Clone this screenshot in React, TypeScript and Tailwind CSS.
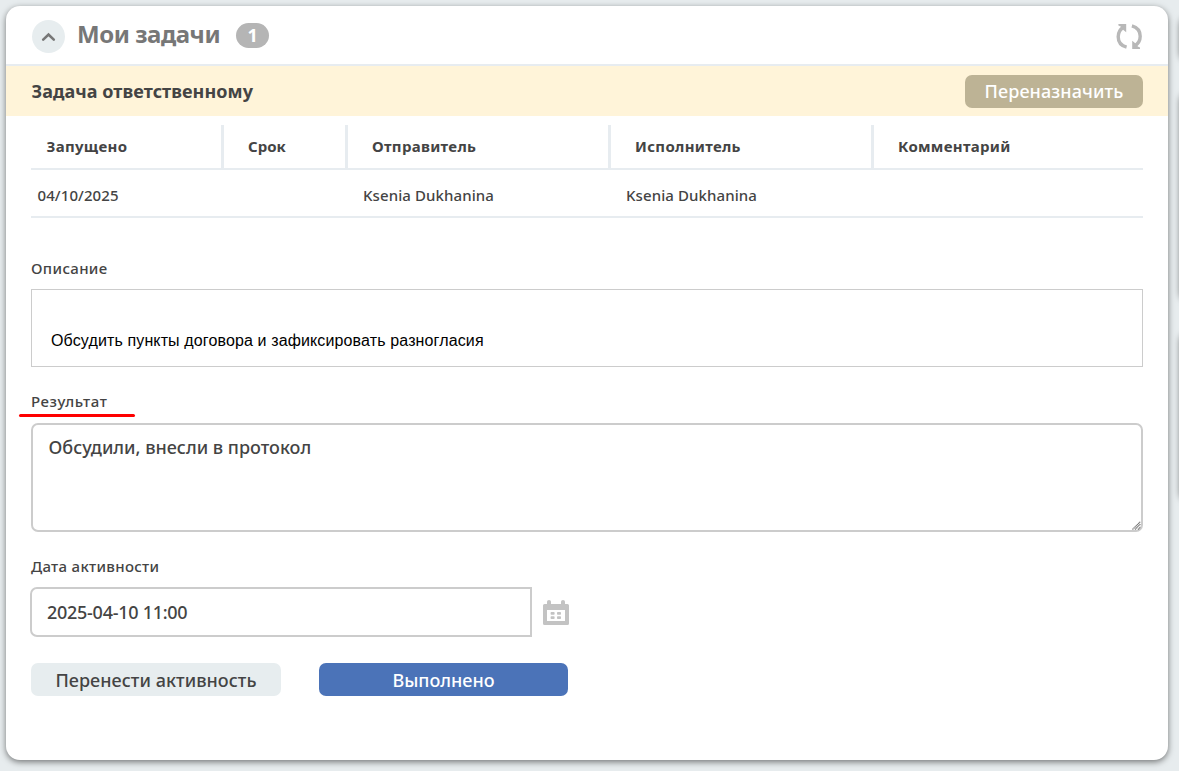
import React from "react";

const columns = ["Запущено", "Срок", "Отправитель", "Исполнитель", "Комментарий"];
const row = ["04/10/2025", "", "Ksenia Dukhanina", "Ksenia Dukhanina", ""];
const grid = "grid grid-cols-[193px_124px_263px_263px_1fr]";

function RefreshIcon() {
  return (
    <svg width="26" height="26" viewBox="0 0 26 26" fill="none" stroke="#b8b8b8" strokeWidth="3.4">
      <path d="M10.6 23.2C5.4 21.8 2.2 17.8 2.2 12.7C2.2 8.6 4 5.4 7.6 3" />
      <path d="M15.9 1.8C21 3.2 24.2 7.2 24.2 12.3C24.2 16.4 22.4 19.6 18.8 22" />
      <path d="M2.4 0H10.2V8.2L7.4 6L4.6 2.6L2.4 1.6Z" fill="#b8b8b8" stroke="none" />
      <path d="M24 25H16.2V16.8L19 19L21.8 22.4L24 23.4Z" fill="#b8b8b8" stroke="none" />
    </svg>
  );
}

function CalendarIcon() {
  return (
    <svg width="26" height="26" viewBox="0 0 26 26" fill="#c3c3c3">
      <path fillRule="evenodd" d="M0 5.5Q0 4 1.5 4H4V1.8Q4 0 6 0T8 1.8V4H18V1.8Q18 0 20 0T22 1.8V4H24.5Q26 4 26 5.5V23.5Q26 25 24.5 25H1.5Q0 25 0 23.5ZM4 10V21H22V10Z" />
      <rect x="7.6" y="12" width="4" height="2.8" rx=".8" />
      <rect x="14" y="12" width="4" height="2.8" rx=".8" />
      <rect x="7.6" y="16.3" width="4" height="2.8" rx=".8" />
      <rect x="14" y="16.3" width="4" height="2.8" rx=".8" />
    </svg>
  );
}

export default function App() {
  return (
    <div className="flex h-[771px] w-[1179px] overflow-hidden bg-[#e7ecee] pt-[6px] pl-[6px] font-['Noto_Sans','Open_Sans',sans-serif] font-medium text-[#444]">
      <main className="h-[754px] w-[1162px] shrink-0 overflow-hidden rounded-[14px] bg-white shadow-[0_2px_6px_rgba(0,0,0,0.5)]">
        <header className="flex h-[60px] items-center border-b-2 border-[#e7ecf0] pr-[26px] pl-[26px]">
          <button className="mt-[3px] flex size-[33px] items-center justify-center rounded-full bg-[#e7edef]">
            <svg className="mt-px" width="15" height="10" viewBox="0 0 15 10" fill="none" stroke="#777" strokeWidth="2.6" strokeLinecap="round" strokeLinejoin="miter">
              <path d="M2.2 7.6L7.5 2.5L12.8 7.6" />
            </svg>
          </button>
          <h1 className="-mt-[2px] ml-[12px] text-[24px] leading-[32px] font-bold tracking-[-0.45px] text-[#777]">Мои задачи</h1>
          <span className="ml-[16px] flex h-[25px] w-[33px] items-center justify-center rounded-full bg-[#b5b5b5] text-[18px] font-bold text-white">1</span>
          <span className="mt-[4px] ml-auto"><RefreshIcon /></span>
        </header>

        <div className="flex h-[50px] items-center justify-between bg-[#fff4d9] px-[25px]">
          <h2 className="pl-[0.5px] text-[18px] font-bold tracking-[0.05px]">Задача ответственному</h2>
          <button className="h-[33px] w-[178px] rounded-[7px] bg-[#bdb395] text-[18px] tracking-[0.1px] text-white">Переназначить</button>
        </div>

        <div className="px-[25px] pt-[9px]">
          <div className={`${grid} h-[45px] border-b-2 border-[#e7ecf0] text-[15px] font-bold`}>
            {columns.map((c, i) => (
              <div key={c} className={`flex items-center ${i < 4 ? "border-r-3 border-[#e7ecf0]" : ""} ${i === 0 ? "pl-[15.5px]" : "pl-[24px]"} ${i === 1 ? "" : "tracking-[0.3px]"}`}>{c}</div>
            ))}
          </div>
          <div className={`${grid} h-[48px] border-b-2 border-[#e7ecf0] text-[15px] tracking-[0.09px]`}>
            {row.map((c, i) => (
              <div key={i} className={`flex items-center pt-[4px] ${i === 0 ? "pl-[6.5px]" : "pl-[15px]"}`}>{c}</div>
            ))}
          </div>

          <div className="mt-[39px] text-[15px] leading-[22px] tracking-[0.35px]">Описание</div>
          <div className="mt-[10px] flex h-[78px] items-end border border-[#ccc] pb-[15px] pl-[19px] font-['Liberation_Sans',sans-serif] text-[16px] leading-[20px] font-normal tracking-[0.13px] text-black">
            Обсудить пункты договора и зафиксировать разногласия
          </div>

          <div className="relative mt-[23px] text-[15px] leading-[22px] tracking-[0.6px]">
            Результат
            <span className="absolute top-[24px] left-[-12px] h-[3px] w-[116px] rounded-full bg-[#fe0000]" />
          </div>
          <div className="relative mt-[11px] h-[109px] rounded-[7px] border-2 border-[#ccc] px-[15.5px] pt-[10px] text-[18px] leading-[25px]">
            Обсудили, внесли в протокол
            <svg className="absolute right-0 bottom-0" width="10" height="10" viewBox="0 0 10 10" fill="none" stroke="#777" strokeWidth="1.3" strokeDasharray="1.2 .4">
              <path d="M1.5 9.5L9.5 1.5M4 9.5L9.5 4M7 9.5L9.5 7" />
            </svg>
          </div>

          <div className="mt-[23px] text-[15px] leading-[22px] tracking-[0.3px]">Дата активности</div>
          <div className="mt-[10px] -ml-px flex items-center">
            <div className="flex h-[50px] w-[502px] items-center rounded-l-[7px] border-2 border-[#ccc] pl-[15px] text-[18px] tracking-[-0.27px]">2025-04-10 11:00</div>
            <span className="mt-[2px] ml-[11px]"><CalendarIcon /></span>
          </div>

          <div className="mt-[26px] flex gap-[38px] text-[18px]">
            <button className="h-[33px] w-[250px] rounded-[7px] bg-[#e7edef] pt-[2px] tracking-[0.05px]">Перенести активность</button>
            <button className="h-[33px] w-[249px] rounded-[7px] bg-[#4b73b8] pt-[2px] text-white">Выполнено</button>
          </div>
        </div>
      </main>
      <aside className="ml-[12px] flex shrink-0 flex-col gap-[30px] pt-[8px]">
        <div className="h-[46px] w-5 rounded-[10px] bg-white shadow-[0_2px_6px_rgba(0,0,0,0.5)]" />
        <div className="h-[210px] w-5 rounded-[10px] bg-white shadow-[0_2px_6px_rgba(0,0,0,0.5)]" />
        <div className="h-[170px] w-5 rounded-[10px] bg-white shadow-[0_2px_6px_rgba(0,0,0,0.5)]" />
      </aside>
    </div>
  );
}
